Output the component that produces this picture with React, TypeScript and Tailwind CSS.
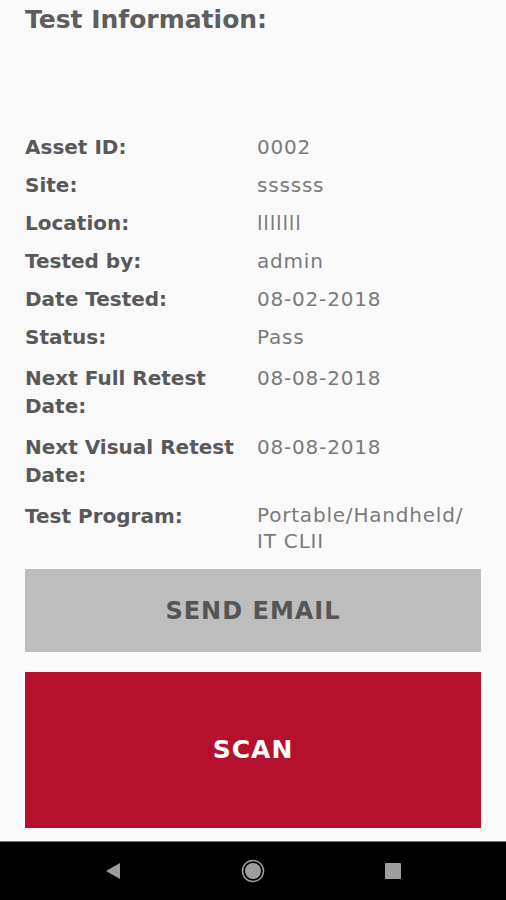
import React from 'react'

const rows: { label: string; value: string[]; tall?: boolean }[] = [
  { label: 'Asset ID:', value: ['0002'] },
  { label: 'Site:', value: ['ssssss'] },
  { label: 'Location:', value: ['lllllll'] },
  { label: 'Tested by:', value: ['admin'] },
  { label: 'Date Tested:', value: ['08-02-2018'] },
  { label: 'Status:', value: ['Pass'] },
  { label: 'Next Full Retest Date:', value: ['08-08-2018'], tall: true },
  { label: 'Next Visual Retest Date:', value: ['08-08-2018'], tall: true },
  { label: 'Test Program:', value: ['Portable/Handheld/', 'IT CLII'], tall: true },
]

const App: React.FC = () => {
  return (
    <div className="w-[506px] h-[900px] flex flex-col bg-[#fafafa] font-['DejaVu_Sans',sans-serif]">
      <div className="flex-1 px-[25px] pt-[4px]">
        {/* title */}
        <h1 className="text-[25px] leading-[32px] font-bold text-[#5e5e5e]">Test Information:</h1>

        {/* details */}
        <div className="mt-[97px] flex flex-col gap-[10px]">
          {rows.map((row) => (
            <div key={row.label} className={`flex leading-[28px] ${row.tall ? 'pt-[3px]' : ''}`}>
              <div className="w-[232px] shrink-0 text-[20px] font-bold text-[#595959]">{row.label}</div>
              <div className="flex-1 text-[20px] tracking-[0.8px] text-[#7a7a7a]">
                {row.value.map((line) => (
                  <div key={line} className={row.value.length > 1 ? 'leading-[26px]' : ''}>{line}</div>
                ))}
              </div>
            </div>
          ))}
        </div>

        {/* buttons */}
        <button className="mt-[15px] w-full h-[83px] bg-[#bdbdbd] text-[#555555] text-[24px] tracking-[1px] font-bold">
          SEND EMAIL
        </button>
        <button className="mt-[20px] w-full h-[156px] bg-[#b5112f] text-white text-[25px] tracking-[1px] font-bold">
          SCAN
        </button>
      </div>

      {/* android nav bar */}
      <div className="h-[59px] bg-black border-t border-[#777] flex items-center justify-center gap-[100px]">
        <div className="w-[40px] flex justify-center">
          <svg width="16" height="18" viewBox="0 0 16 18">
            <polygon points="15,1 15,17 1,9" fill="#9e9e9e" />
          </svg>
        </div>
        <div className="w-[40px] flex justify-center">
          <svg width="24" height="24" viewBox="0 0 24 24">
            <circle cx="12" cy="12" r="10.5" fill="none" stroke="#9e9e9e" strokeWidth="1.5" />
            <circle cx="12" cy="12" r="8" fill="#9e9e9e" />
          </svg>
        </div>
        <div className="w-[40px] flex justify-center">
          <svg width="16" height="16" viewBox="0 0 16 16">
            <rect x="0" y="0" width="16" height="16" rx="1" fill="#9e9e9e" />
          </svg>
        </div>
      </div>
    </div>
  )
}

export default App
